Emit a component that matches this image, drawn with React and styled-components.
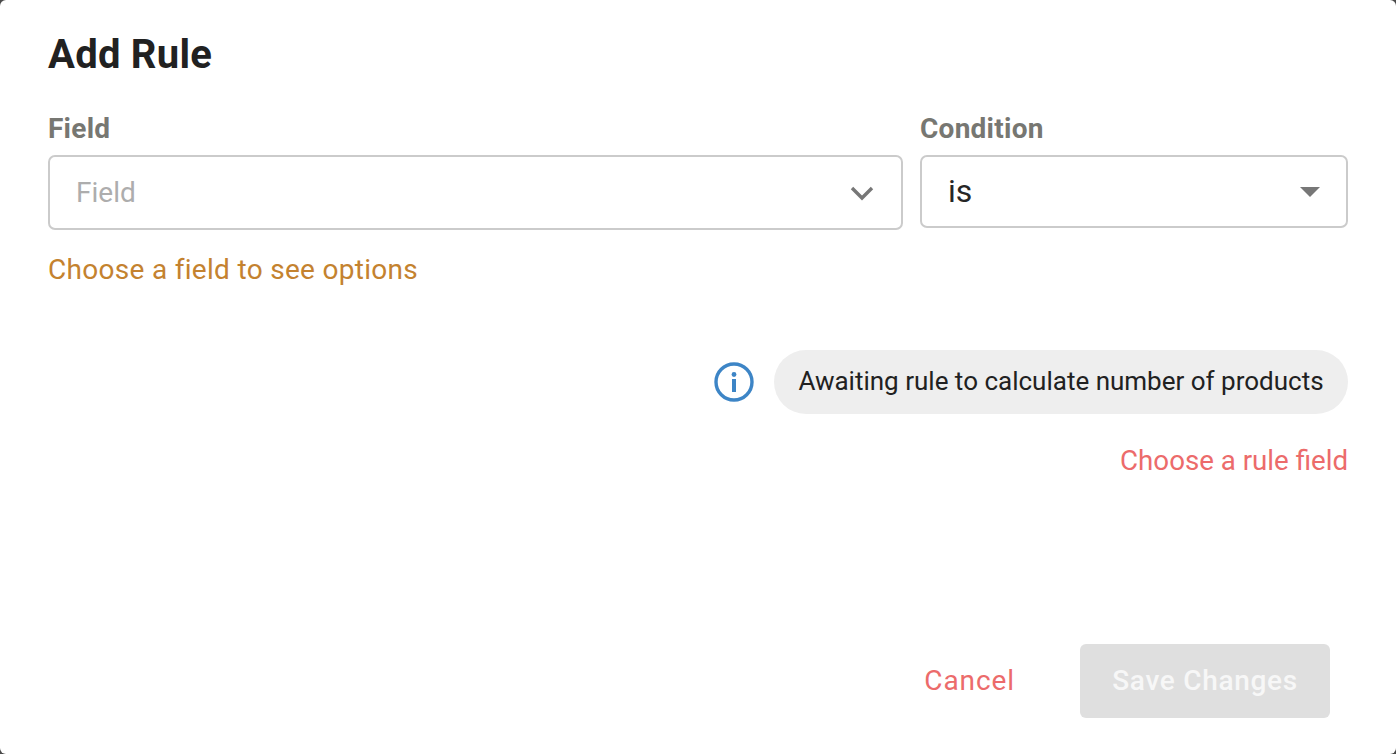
import React from "react";
import styled, { createGlobalStyle } from "styled-components";

const GlobalStyle = createGlobalStyle`
  html, body {
    margin: 0;
    padding: 0;
    background: #4a4a4a;
    font-family: Roboto, "Liberation Sans", sans-serif;
  }
`;

const Modal = styled.div`
  width: 1396px;
  height: 754px;
  box-sizing: border-box;
  padding: 33px 48px 36px;
  background: #fff;
  border-radius: 6px;
  display: flex;
  flex-direction: column;
  overflow: hidden;
`;

const Title = styled.h2`
  margin: 0;
  font-size: 40px;
  line-height: 44px;
  font-weight: 700;
  letter-spacing: 0.25px;
  color: #212121;
`;

const Fields = styled.div`
  display: flex;
  gap: 17px;
  margin-top: 37px;
`;

const FieldColumn = styled.div`
  display: flex;
  flex-direction: column;
  width: ${(p) => p.$width}px;
`;

const Label = styled.label`
  font-size: 28px;
  line-height: 30px;
  font-weight: 700;
  letter-spacing: 0.25px;
  color: #777772;
  margin-bottom: 11px;
`;

const SelectBox = styled.div`
  box-sizing: border-box;
  height: ${(p) => p.$height}px;
  border: 2px solid #cbcbcb;
  border-radius: 7px;
  padding: 0 26px;
  display: flex;
  align-items: center;
  justify-content: space-between;
`;

const Placeholder = styled.span`
  font-size: 28px;
  color: #adadad;
`;

const Value = styled.span`
  font-size: 32px;
  padding-bottom: 2px;
  color: #262626;
`;

const Helper = styled.div`
  margin-top: 25px;
  font-size: 28px;
  line-height: 30px;
  letter-spacing: 0.3px;
  color: #c4822f;
`;

const StatusRow = styled.div`
  margin-top: 65px;
  display: flex;
  justify-content: flex-end;
  align-items: center;
  gap: 20px;
`;

const Pill = styled.div`
  height: 64px;
  width: 574px;
  box-sizing: border-box;
  padding-bottom: 2px;
  border-radius: 32px;
  background: #eeeeee;
  display: flex;
  align-items: center;
  justify-content: center;
  font-size: 26px;
  color: #212121;
`;

const RuleError = styled.div`
  margin-top: 31px;
  text-align: right;
  font-size: 27.7px;
  line-height: 32px;
  color: #ec6b6b;
`;

const Actions = styled.div`
  margin-top: auto;
  display: flex;
  justify-content: flex-end;
  align-items: center;
  gap: 65px;
  padding-right: 18px;
`;

const CancelButton = styled.button`
  border: 0;
  padding: 0 0 2px;
  background: none;
  font: inherit;
  font-size: 28px;
  letter-spacing: 0.9px;
  color: #ec6b6b;
`;

const SaveButton = styled.button`
  width: 250px;
  height: 74px;
  border: 0;
  border-radius: 6px;
  padding: 0 0 2px;
  background: #dfdfdf;
  font: inherit;
  font-size: 28px;
  font-weight: 500;
  letter-spacing: 0.7px;
  color: #f7f7f7;
`;

function Chevron() {
  return (
    <svg width="26" height="16" viewBox="0 0 26 16" fill="none">
      <path d="M3 3 L13 13 L23 3" stroke="#777" strokeWidth="3.4" />
    </svg>
  );
}

function Caret() {
  return (
    <svg width="20" height="10" viewBox="0 0 20 10">
      <path d="M0 0 H20 L10 10 Z" fill="#777" />
    </svg>
  );
}

function InfoIcon() {
  return (
    <svg width="40" height="40" viewBox="0 0 40 40" fill="none">
      <circle cx="20" cy="20" r="18" stroke="#3d85c6" strokeWidth="3.4" />
      <circle cx="20" cy="12.5" r="2.4" fill="#3d85c6" />
      <rect x="18" y="17" width="4" height="13" fill="#3d85c6" />
    </svg>
  );
}

export default function App() {
  return (
    <>
      <GlobalStyle />
      <Modal>
        <Title>Add Rule</Title>
        <Fields>
          <FieldColumn $width={855}>
            <Label>Field</Label>
            <SelectBox $height={75}>
              <Placeholder>Field</Placeholder>
              <Chevron />
            </SelectBox>
          </FieldColumn>
          <FieldColumn $width={428}>
            <Label>Condition</Label>
            <SelectBox $height={73}>
              <Value>is</Value>
              <Caret />
            </SelectBox>
          </FieldColumn>
        </Fields>
        <Helper>Choose a field to see options</Helper>
        <StatusRow>
          <InfoIcon />
          <Pill>Awaiting rule to calculate number of products</Pill>
        </StatusRow>
        <RuleError>Choose a rule field</RuleError>
        <Actions>
          <CancelButton>Cancel</CancelButton>
          <SaveButton>Save Changes</SaveButton>
        </Actions>
      </Modal>
    </>
  );
}
